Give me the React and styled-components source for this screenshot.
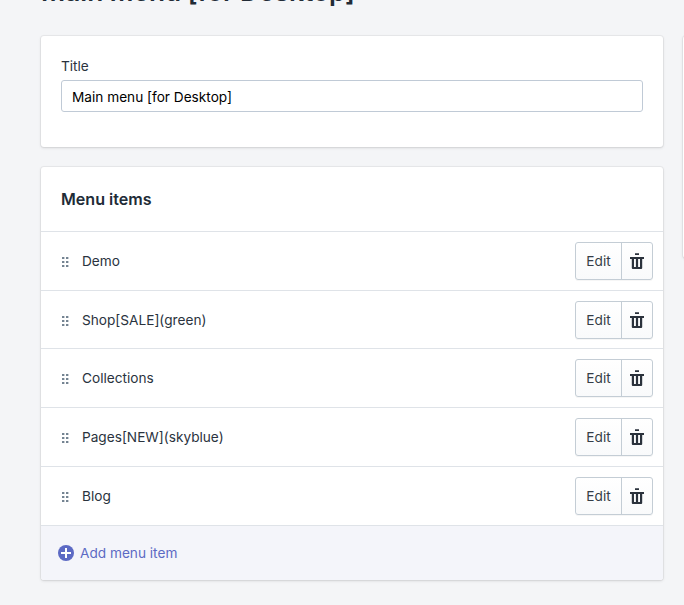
import React from 'react';
import styled, { createGlobalStyle } from 'styled-components';

const Global = createGlobalStyle`
  *, *::before, *::after { box-sizing: border-box; }
  html, body { margin: 0; background: #f4f5f7; overflow: hidden; }
  body { font-family: Inter, "Liberation Sans", sans-serif; font-size: 13.65px; color: #2a333e; }
  button, input { font: inherit; letter-spacing: inherit; }
`;

const Page = styled.div`
  width: 684px;
  height: 605px;
  overflow: hidden;
  padding-left: 41px;
`;

const PageTitle = styled.h1`
  margin: -23px 0 0;
  height: 59px;
  color: #212b36;
  font-size: 26.25px;
  line-height: 30px;
  font-weight: 600;
  white-space: nowrap;
`;

const Columns = styled.div`
  display: flex;
  align-items: flex-start;
  gap: 20px;
  width: 900px;
`;

const Main = styled.main`
  display: flex;
  flex-direction: column;
  gap: 20px;
  width: 622px;
`;

const Card = styled.section`
  height: ${(p) => p.$height}px;
  background: #fff;
  border-radius: 3px;
  box-shadow: 0 0 0 1px rgba(63, 63, 68, 0.06), 0 1px 3px rgba(63, 63, 68, 0.16);
  overflow: hidden;
`;

const Sidebar = styled.aside`
  width: 230px;
`;

const Field = styled.label`
  display: flex;
  flex-direction: column;
  padding: 20px 20px 0 20px;
  line-height: 20px;
`;

const Input = styled.input`
  height: 32px;
  margin-top: 4px;
  padding: 2px 10px 0;
  border: 1px solid #c0cad6;
  border-radius: 3px;
  background: #fff;
  color: #000;
  outline: none;
`;

const CardHeading = styled.h2`
  margin: 0;
  padding-left: 20px;
  height: 64px;
  line-height: 65px;
  color: #212b36;
  font-size: 16.1px;
  font-weight: 600;
`;

const List = styled.ul`
  margin: 0;
  padding: 0;
  list-style: none;
`;

const Row = styled.li`
  display: flex;
  align-items: center;
  height: 58.73px;
  padding: 0 10px 0 21px;
  border-top: 1px solid #dfe3e8;
`;

const Name = styled.span`
  flex: 1;
  margin-left: 13px;
`;

const ButtonGroup = styled.div`
  display: flex;
  height: 38px;
  border: 1px solid #c4cdd5;
  border-radius: 3px;
  background: linear-gradient(to bottom, #fff, #f9fafb);
  box-shadow: 0 1px 0 rgba(22, 29, 37, 0.04);
`;

const Action = styled.button`
  display: flex;
  align-items: center;
  justify-content: center;
  width: ${(p) => p.$width}px;
  padding: 0;
  border: 0;
  background: none;
  color: #353d47;

  & + & { border-left: 1px solid #c4cdd5; }
`;

const AddItem = styled.button`
  display: flex;
  align-items: center;
  gap: 6px;
  width: 100%;
  height: 55.3px;
  padding: 0 0 0 17px;
  border: 0;
  border-top: 1px solid #dfe3e8;
  background: #f4f5fa;
  color: #5c6ac4;
`;

const GripIcon = styled.svg`
  flex: none;
  margin-top: 2px;
  fill: #738391;
`;

const Grip = () => (
  <GripIcon width="7" height="10" viewBox="0 0 7 10">
    {[0, 4, 8].map((y) => [0, 4].map((x) => (
      <rect key={`${x}-${y}`} x={x} y={y} width="2.4" height="2" rx="0.3" />
    )))}
  </GripIcon>
);

const Trash = () => (
  <svg width="14" height="16" viewBox="0 0 14 16" fill="#2b323c">
    <path fillRule="evenodd" d="M5 0.2h4v1.8H5zM0 4h14v2h-1.8v9a1 1 0 0 1-1 1H2.8a1 1 0 0 1-1-1V6H0zM4 6v8h1.9V6zM8.1 6v8H10V6z" />
  </svg>
);

const Plus = () => (
  <svg width="16" height="16" viewBox="0 0 16 16">
    <circle cx="8" cy="8" r="8" fill="#5c6ac4" />
    <path d="M8 3v10M3 8h10" stroke="#fff" strokeWidth="2" />
  </svg>
);

const items = ['Demo', 'Shop[SALE](green)', 'Collections', 'Pages[NEW](skyblue)', 'Blog'];

export default function App() {
  return (
    <Page>
      <Global />
      <PageTitle>Main menu [for Desktop]</PageTitle>
      <Columns>
        <Main>
          <Card $height={111}>
            <Field>
              Title
              <Input defaultValue="Main menu [for Desktop]" />
            </Field>
          </Card>
          <Card $height={413}>
            <CardHeading>Menu items</CardHeading>
            <List>
              {items.map((item) => (
                <Row key={item}>
                  <Grip />
                  <Name>{item}</Name>
                  <ButtonGroup>
                    <Action $width={45}>Edit</Action>
                    <Action $width={31} aria-label="Delete"><Trash /></Action>
                  </ButtonGroup>
                </Row>
              ))}
            </List>
            <AddItem><Plus />Add menu item</AddItem>
          </Card>
        </Main>
        <Sidebar><Card $height={222} /></Sidebar>
      </Columns>
    </Page>
  );
}
